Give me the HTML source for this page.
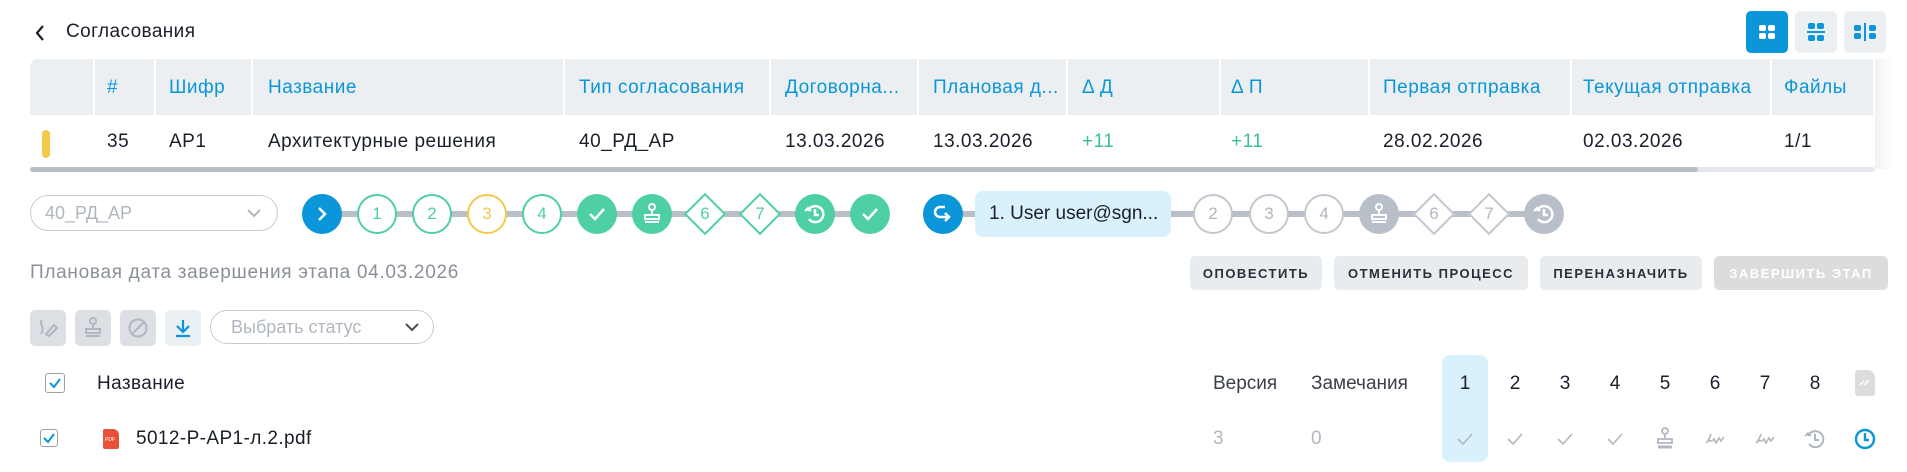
<!DOCTYPE html>
<html><head><meta charset="utf-8"><style>
*{box-sizing:border-box;margin:0;padding:0}
body{width:1907px;height:472px;background:#fff;font-family:"Liberation Sans",sans-serif;color:#1a1f2b;position:relative;overflow:hidden}
.a{position:absolute;white-space:nowrap}
.hd{position:absolute;left:30px;top:59px;width:1845px;height:56px;background:#eceff2;border-radius:8px 0 0 0}
.sep{position:absolute;top:59px;height:56px;width:2px;background:#fff}
.ht{position:absolute;top:77px;font-size:19px;color:#0a96d8;letter-spacing:.5px}
.rt{position:absolute;top:131px;font-size:19px;color:#1a1f2b;letter-spacing:.5px}
.c{position:absolute;width:40px;height:40px;border-radius:50%;top:194px;display:flex;align-items:center;justify-content:center;font-size:17px;background:#fff}
.g{border:2px solid #4fcfa5;color:#4fcfa5}
.gf{background:#4fcfa5}
.gr{border:2px solid #c2c8d0;color:#b0b7c0}
.grf{background:#b8bfc8}
.d{position:absolute;width:30px;height:30px;top:199px;transform:rotate(45deg);background:#fff}
.dl{position:absolute;top:194px;width:40px;height:40px;display:flex;align-items:center;justify-content:center;font-size:17px}
.btn{position:absolute;top:256px;height:34px;border-radius:5px;background:#e8ecef;font-size:13px;font-weight:bold;letter-spacing:1.5px;display:flex;align-items:center;justify-content:center;color:#2a2f3a}
.ib{position:absolute;top:310px;width:36px;height:36px;border-radius:5px;background:#dcdfe3;display:flex;align-items:center;justify-content:center}
.col{position:absolute;font-size:19px;transform:translateX(-50%)}
</style></head><body>
<svg class="a" style="left:34px;top:24px" width="12" height="18" viewBox="0 0 12 18"><path d="M9 2 L3 9 L9 16" stroke="#1a1f2b" stroke-width="2.2" fill="none"/></svg>
<div class="a" style="left:66px;top:21px;font-size:19px;letter-spacing:.4px">Согласования</div>
<div class="a" style="left:1746px;top:11px;width:42px;height:42px;border-radius:5px;background:#0a96d8"><svg width="42" height="42"><rect x="13" y="14" width="7" height="6" rx="2" fill="#fff"/><rect x="22" y="14" width="7" height="6" rx="2" fill="#fff"/><rect x="13" y="22" width="7" height="6" rx="2" fill="#fff"/><rect x="22" y="22" width="7" height="6" rx="2" fill="#fff"/></svg></div>
<div class="a" style="left:1795px;top:11px;width:42px;height:42px;border-radius:5px;background:#eceff2"><svg width="42" height="42"><rect x="13" y="12" width="7" height="6" rx="2" fill="#0a96d8"/><rect x="22" y="12" width="7" height="6" rx="2" fill="#0a96d8"/><rect x="12" y="20" width="18" height="2" fill="#0a96d8"/><rect x="13" y="24" width="7" height="6" rx="2" fill="#0a96d8"/><rect x="22" y="24" width="7" height="6" rx="2" fill="#0a96d8"/></svg></div>
<div class="a" style="left:1844px;top:11px;width:42px;height:42px;border-radius:5px;background:#eceff2"><svg width="42" height="42"><rect x="10" y="14" width="7" height="6" rx="2" fill="#0a96d8"/><rect x="10" y="22" width="7" height="6" rx="2" fill="#0a96d8"/><rect x="20" y="12" width="2" height="18" fill="#0a96d8"/><rect x="25" y="14" width="7" height="6" rx="2" fill="#0a96d8"/><rect x="25" y="22" width="7" height="6" rx="2" fill="#0a96d8"/></svg></div>

<div class="hd"></div>
<div class="a" style="left:1875px;top:59px;width:18px;height:110px;background:linear-gradient(90deg,#f0f2f5,#fff)"></div>
<div class="sep" style="left:93px"></div><div class="sep" style="left:154px"></div><div class="sep" style="left:251px"></div><div class="sep" style="left:563px"></div><div class="sep" style="left:769px"></div><div class="sep" style="left:917px"></div><div class="sep" style="left:1066px"></div><div class="sep" style="left:1219px"></div><div class="sep" style="left:1368px"></div><div class="sep" style="left:1570px"></div><div class="sep" style="left:1770px"></div><div class="sep" style="left:1873px"></div>
<div class="ht" style="left:107px">#</div><div class="ht" style="left:169px">Шифр</div><div class="ht" style="left:268px">Название</div><div class="ht" style="left:579px">Тип согласования</div><div class="ht" style="left:785px">Договорна...</div><div class="ht" style="left:933px">Плановая д...</div><div class="ht" style="left:1082px">Δ Д</div><div class="ht" style="left:1231px">Δ П</div><div class="ht" style="left:1383px">Первая отправка</div><div class="ht" style="left:1583px">Текущая отправка</div><div class="ht" style="left:1784px">Файлы</div>
<div class="a" style="left:42px;top:130px;width:8px;height:28px;border-radius:4px;background:#f2c94c"></div>
<div class="rt" style="left:107px">35</div><div class="rt" style="left:169px">АР1</div><div class="rt" style="left:268px">Архитектурные решения</div><div class="rt" style="left:579px">40_РД_АР</div><div class="rt" style="left:785px">13.03.2026</div><div class="rt" style="left:933px">13.03.2026</div><div class="rt" style="left:1082px;color:#3cc08f">+11</div><div class="rt" style="left:1231px;color:#3cc08f">+11</div><div class="rt" style="left:1383px">28.02.2026</div><div class="rt" style="left:1583px">02.03.2026</div><div class="rt" style="left:1784px">1/1</div>
<div class="a" style="left:30px;top:167px;width:1845px;height:5px;background:#e4e8ec;border-radius:3px"></div>
<div class="a" style="left:30px;top:167px;width:1668px;height:5px;background:#b8bfc8;border-radius:3px"></div>

<div class="a" style="left:30px;top:195px;width:248px;height:36px;border:1px solid #c8ccd2;border-radius:18px;color:#b0b7c0;font-size:18px;padding:7px 14px">40_РД_АР<svg style="position:absolute;right:16px;top:13px" width="14" height="9"><path d="M1 1 L7 7 L13 1" stroke="#b0b7c0" stroke-width="2" fill="none"/></svg></div>

<div class="a" style="left:340px;top:211px;width:520px;height:6px;background:#b8bfc8"></div>
<div class="a" style="left:960px;top:211px;width:570px;height:6px;background:#b8bfc8"></div>
<div class="c" style="left:302px;background:#0a96d8"><svg width="14" height="16"><path d="M4 2 L10 8 L4 14" stroke="#fff" stroke-width="2.5" fill="none"/></svg></div>
<div class="c g" style="left:357px">1</div>
<div class="c g" style="left:412px">2</div>
<div class="c" style="left:467px;border:2px solid #f2c94c;color:#f2c94c">3</div>
<div class="c g" style="left:522px">4</div>
<div class="c gf" style="left:577px"><svg width="18" height="14"><path d="M2 7 L7 12 L16 2" stroke="#fff" stroke-width="2.5" fill="none"/></svg></div>
<div class="c gf" style="left:632px"><svg width="20" height="22"><circle cx="10" cy="4" r="3" stroke="#fff" stroke-width="2" fill="none"/><path d="M10 7 V11 M3 12 H17 V16 H3 Z M3 19 H17" stroke="#fff" stroke-width="2" fill="none"/></svg></div>
<div class="d" style="left:690px;border:2px solid #4fcfa5"></div><div class="dl" style="left:685px;color:#4fcfa5">6</div>
<div class="d" style="left:745px;border:2px solid #4fcfa5"></div><div class="dl" style="left:740px;color:#4fcfa5">7</div>
<div class="c gf" style="left:795px"><svg width="24" height="24"><path d="M5 9 A8 8 0 1 1 6 17" stroke="#fff" stroke-width="2.5" fill="none"/><path d="M2 9 L5 6 L8 9" stroke="#fff" stroke-width="2" fill="none"/><path d="M12 7 V13 H16" stroke="#fff" stroke-width="2.5" fill="none"/></svg></div>
<div class="c gf" style="left:850px"><svg width="18" height="14"><path d="M2 7 L7 12 L16 2" stroke="#fff" stroke-width="2.5" fill="none"/></svg></div>
<div class="c" style="left:923px;background:#0a96d8"><svg width="24" height="24"><path d="M14 5 H9 A5 5 0 0 0 9 15 H18 M14 11 L18 15 L14 19" stroke="#fff" stroke-width="2.5" fill="none"/></svg></div>
<div class="a" style="left:975px;top:191px;width:196px;height:46px;border-radius:8px;background:#d9f1fc;font-size:19px;padding:12px 0 0 14px">1. User user@sgn...</div>
<div class="c gr" style="left:1193px">2</div>
<div class="c gr" style="left:1249px">3</div>
<div class="c gr" style="left:1304px">4</div>
<div class="c grf" style="left:1359px"><svg width="20" height="22"><circle cx="10" cy="4" r="3" stroke="#fff" stroke-width="2" fill="none"/><path d="M10 7 V11 M3 12 H17 V16 H3 Z M3 19 H17" stroke="#fff" stroke-width="2" fill="none"/></svg></div>
<div class="d" style="left:1419px;border:2px solid #c2c8d0"></div><div class="dl" style="left:1414px;color:#b0b7c0">6</div>
<div class="d" style="left:1474px;border:2px solid #c2c8d0"></div><div class="dl" style="left:1469px;color:#b0b7c0">7</div>
<div class="c grf" style="left:1524px"><svg width="24" height="24"><path d="M5 9 A8 8 0 1 1 6 17" stroke="#fff" stroke-width="2.5" fill="none"/><path d="M2 9 L5 6 L8 9" stroke="#fff" stroke-width="2" fill="none"/><path d="M12 7 V13 H16" stroke="#fff" stroke-width="2.5" fill="none"/></svg></div>

<div class="a" style="left:30px;top:262px;font-size:19px;letter-spacing:.7px;color:#8a9099">Плановая дата завершения этапа 04.03.2026</div>
<div class="btn" style="left:1190px;width:132px">ОПОВЕСТИТЬ</div>
<div class="btn" style="left:1334px;width:194px">ОТМЕНИТЬ ПРОЦЕСС</div>
<div class="btn" style="left:1540px;width:162px">ПЕРЕНАЗНАЧИТЬ</div>
<div class="btn" style="left:1714px;width:174px;background:#dcdcdc;color:#fff">ЗАВЕРШИТЬ ЭТАП</div>

<div class="ib" style="left:30px"><svg width="24" height="24"><path d="M6 4 C2 8 10 10 5 18 M10 18 L18 9 L21 12 L13 20 Z" stroke="#b0b7c0" stroke-width="2" fill="none"/></svg></div>
<div class="ib" style="left:75px"><svg width="20" height="22"><circle cx="10" cy="4" r="3" stroke="#b0b7c0" stroke-width="2" fill="none"/><path d="M10 7 V11 M3 12 H17 V16 H3 Z M3 19 H17" stroke="#b0b7c0" stroke-width="2" fill="none"/></svg></div>
<div class="ib" style="left:120px"><svg width="22" height="22"><circle cx="11" cy="11" r="8.5" stroke="#b0b7c0" stroke-width="2" fill="none"/><path d="M5 17 L17 5" stroke="#b0b7c0" stroke-width="2"/></svg></div>
<div class="ib" style="left:165px;background:#eaf0f4"><svg width="20" height="22"><path d="M10 3 V14 M4 9 L10 15 L16 9 M3 19 H17" stroke="#0a96d8" stroke-width="2.2" fill="none"/></svg></div>
<div class="a" style="left:210px;top:310px;width:224px;height:34px;border:1px solid #c8ccd2;border-radius:17px;color:#b0b7c0;font-size:18px;padding:6px 20px">Выбрать статус<svg style="position:absolute;right:14px;top:12px" width="14" height="9"><path d="M1 1 L7 7 L13 1" stroke="#4a4f58" stroke-width="2" fill="none"/></svg></div>

<div class="a" style="left:1442px;top:355px;width:46px;height:107px;border-radius:8px;background:#d9f1fc"></div>
<div class="a" style="left:45px;top:373px;width:20px;height:20px;border:1px solid #9aa1aa;border-radius:3px"><svg width="18" height="18"><path d="M4 9 L8 13 L14 5" stroke="#0a96d8" stroke-width="2" fill="none"/></svg></div>
<div class="a" style="left:97px;top:373px;font-size:19px;letter-spacing:.4px">Название</div>
<div class="a" style="left:1213px;top:373px;font-size:19px;color:#3a3f48">Версия</div>
<div class="a" style="left:1311px;top:373px;font-size:19px;color:#3a3f48">Замечания</div>
<div class="col" style="left:1465px;top:373px">1</div><div class="col" style="left:1515px;top:373px">2</div><div class="col" style="left:1565px;top:373px">3</div><div class="col" style="left:1615px;top:373px">4</div><div class="col" style="left:1665px;top:373px">5</div><div class="col" style="left:1715px;top:373px">6</div><div class="col" style="left:1765px;top:373px">7</div><div class="col" style="left:1815px;top:373px">8</div>
<div class="a" style="left:1855px;top:370px;width:20px;height:26px;background:#dcdcdc;border-radius:3px 8px 3px 3px"><svg width="20" height="26"><path d="M5 15 L9 11 M9 15 L14 10" stroke="#fff" stroke-width="1.5"/></svg></div>

<div class="a" style="left:40px;top:429px;width:18px;height:18px;border:1px solid #9aa1aa;border-radius:3px"><svg width="16" height="16"><path d="M3 8 L7 12 L13 4" stroke="#0a96d8" stroke-width="2" fill="none"/></svg></div>
<div class="a" style="left:103px;top:429px;width:16px;height:20px;background:#e8503a;border-radius:2px 6px 2px 2px;color:#fff;font-size:5px;padding:8px 0 0 2px">PDF</div>
<div class="a" style="left:136px;top:428px;font-size:19px;letter-spacing:.4px">5012-Р-АР1-л.2.pdf</div>
<div class="a" style="left:1213px;top:428px;font-size:19px;color:#b0b7c0">3</div>
<div class="a" style="left:1311px;top:428px;font-size:19px;color:#b0b7c0">0</div>
<svg class="a" style="left:1455px;top:431px" width="20" height="16"><path d="M3 8 L8 13 L17 3" stroke="#b0b7c0" stroke-width="1.6" fill="none"/></svg>
<svg class="a" style="left:1505px;top:431px" width="20" height="16"><path d="M3 8 L8 13 L17 3" stroke="#b0b7c0" stroke-width="1.6" fill="none"/></svg>
<svg class="a" style="left:1555px;top:431px" width="20" height="16"><path d="M3 8 L8 13 L17 3" stroke="#b0b7c0" stroke-width="1.6" fill="none"/></svg>
<svg class="a" style="left:1605px;top:431px" width="20" height="16"><path d="M3 8 L8 13 L17 3" stroke="#b0b7c0" stroke-width="1.6" fill="none"/></svg>
<svg class="a" style="left:1655px;top:427px" width="20" height="24"><circle cx="10" cy="4" r="3" stroke="#b0b7c0" stroke-width="1.8" fill="none"/><path d="M10 7 V11 M3 12 H17 V16 H3 Z" stroke="#b0b7c0" stroke-width="1.8" fill="none"/><path d="M3 20 H17" stroke="#b0b7c0" stroke-width="3"/></svg>
<svg class="a" style="left:1703px;top:431px" width="24" height="16"><path d="M8 3 C6 10 2 13 4 11 C6 8 8 12 11 8 L13 12 L16 7 L18 10 L21 6" stroke="#b0b7c0" stroke-width="1.6" fill="none"/></svg>
<svg class="a" style="left:1753px;top:431px" width="24" height="16"><path d="M8 3 C6 10 2 13 4 11 C6 8 8 12 11 8 L13 12 L16 7 L18 10 L21 6" stroke="#b0b7c0" stroke-width="1.6" fill="none"/></svg>
<svg class="a" style="left:1803px;top:427px" width="24" height="24"><path d="M5 9 A8 8 0 1 1 6 17" stroke="#b0b7c0" stroke-width="2" fill="none"/><path d="M2 9 L5 6 L8 9" stroke="#b0b7c0" stroke-width="1.6" fill="none"/><path d="M12 7 V13 H16" stroke="#b0b7c0" stroke-width="2" fill="none"/></svg>
<svg class="a" style="left:1853px;top:427px" width="24" height="24"><circle cx="12" cy="12" r="9" stroke="#0a96d8" stroke-width="2.4" fill="none"/><path d="M12 6 V13 H16" stroke="#0a96d8" stroke-width="2.4" fill="none"/></svg>
</body></html>
